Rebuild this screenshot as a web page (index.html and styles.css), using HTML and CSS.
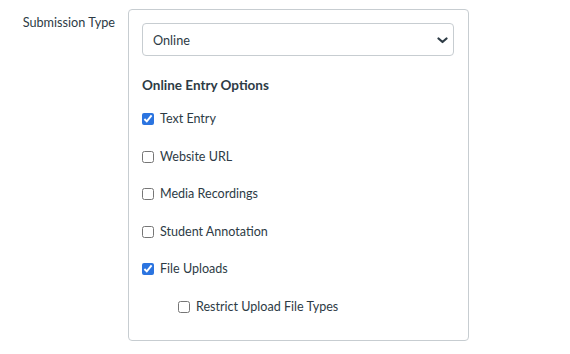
FILE: index.html
```html
<!DOCTYPE html>
<html lang="en">

<head>
    <meta charset="UTF-8">
    <meta name="viewport" content="width=device-width, initial-scale=1.0">
    <title>Submission Type</title>
    <link rel="stylesheet" href="styles.css">
</head>

<body>
    <div class="form-row">
        <label class="form-label" for="submission-type">Submission Type</label>

        <div class="panel">
            <div class="select-wrap">
                <select id="submission-type" class="select">
                    <option selected>Online</option>
                    <option>No Submission</option>
                    <option>On Paper</option>
                    <option>External Tool</option>
                </select>
                <svg class="chevron" width="11" height="7" viewBox="0 0 11 7" aria-hidden="true">
                    <path d="M1.5 1.5 L5.5 5 L9.5 1.5" fill="none" stroke="#2d3b45" stroke-width="2.2" stroke-linecap="round" stroke-linejoin="round" />
                </svg>
            </div>

            <h3 class="options-title">Online Entry Options</h3>

            <div class="options">
                <label class="option"><input type="checkbox" checked> Text Entry</label>
                <label class="option"><input type="checkbox"> Website URL</label>
                <label class="option"><input type="checkbox"> Media Recordings</label>
                <label class="option"><input type="checkbox"> Student Annotation</label>
                <label class="option"><input type="checkbox" checked> File Uploads</label>
                <label class="option sub-option"><input type="checkbox"> Restrict Upload File Types</label>
            </div>
        </div>
    </div>
</body>

</html>
```

FILE: styles.css
```css
body {
    font-family: Lato, 'Noto Sans', sans-serif;
    background-color: #ffffff;
    color: #2d3b45;
    margin: 0;
    padding: 9px 0 0 0;
    font-size: 13px;
}

.form-row {
    display: flex;
    align-items: flex-start;
}

.form-label {
    width: 115px;
    margin-right: 13px;
    text-align: right;
    padding-top: 3px;
    line-height: 20px;
    font-size: 12.7px;
}

.panel {
    box-sizing: border-box;
    width: 341px;
    height: 332px;
    border: 1px solid #c7cdd1;
    border-radius: 4px;
    padding: 13px 14px 0 13px;
}

.select-wrap {
    position: relative;
    width: 312px;
}

.select {
    appearance: none;
    -webkit-appearance: none;
    box-sizing: border-box;
    width: 312px;
    height: 33px;
    border: 1px solid #c7cdd1;
    border-radius: 4px;
    background-color: #ffffff;
    color: #2d3b45;
    font-family: Lato, 'Noto Sans', sans-serif;
    font-size: 12.7px;
    padding: 0 10px;
    margin: 0;
}

.chevron {
    position: absolute;
    right: 6px;
    top: 14px;
    pointer-events: none;
}

.options-title {
    margin: 19px 0 0 0;
    font-size: 13.5px;
    font-weight: bold;
    line-height: 20px;
}

.options {
    display: flex;
    flex-direction: column;
    margin-top: 14px;
    gap: 17.6px;
}

.option {
    display: flex;
    align-items: center;
    line-height: 20px;
    font-size: 12.55px;
}

.option input {
    width: 12px;
    height: 12px;
    margin: 0 6px 0 0;
    accent-color: #2b74e0;
}

.sub-option {
    padding-left: 36px;
}
```
